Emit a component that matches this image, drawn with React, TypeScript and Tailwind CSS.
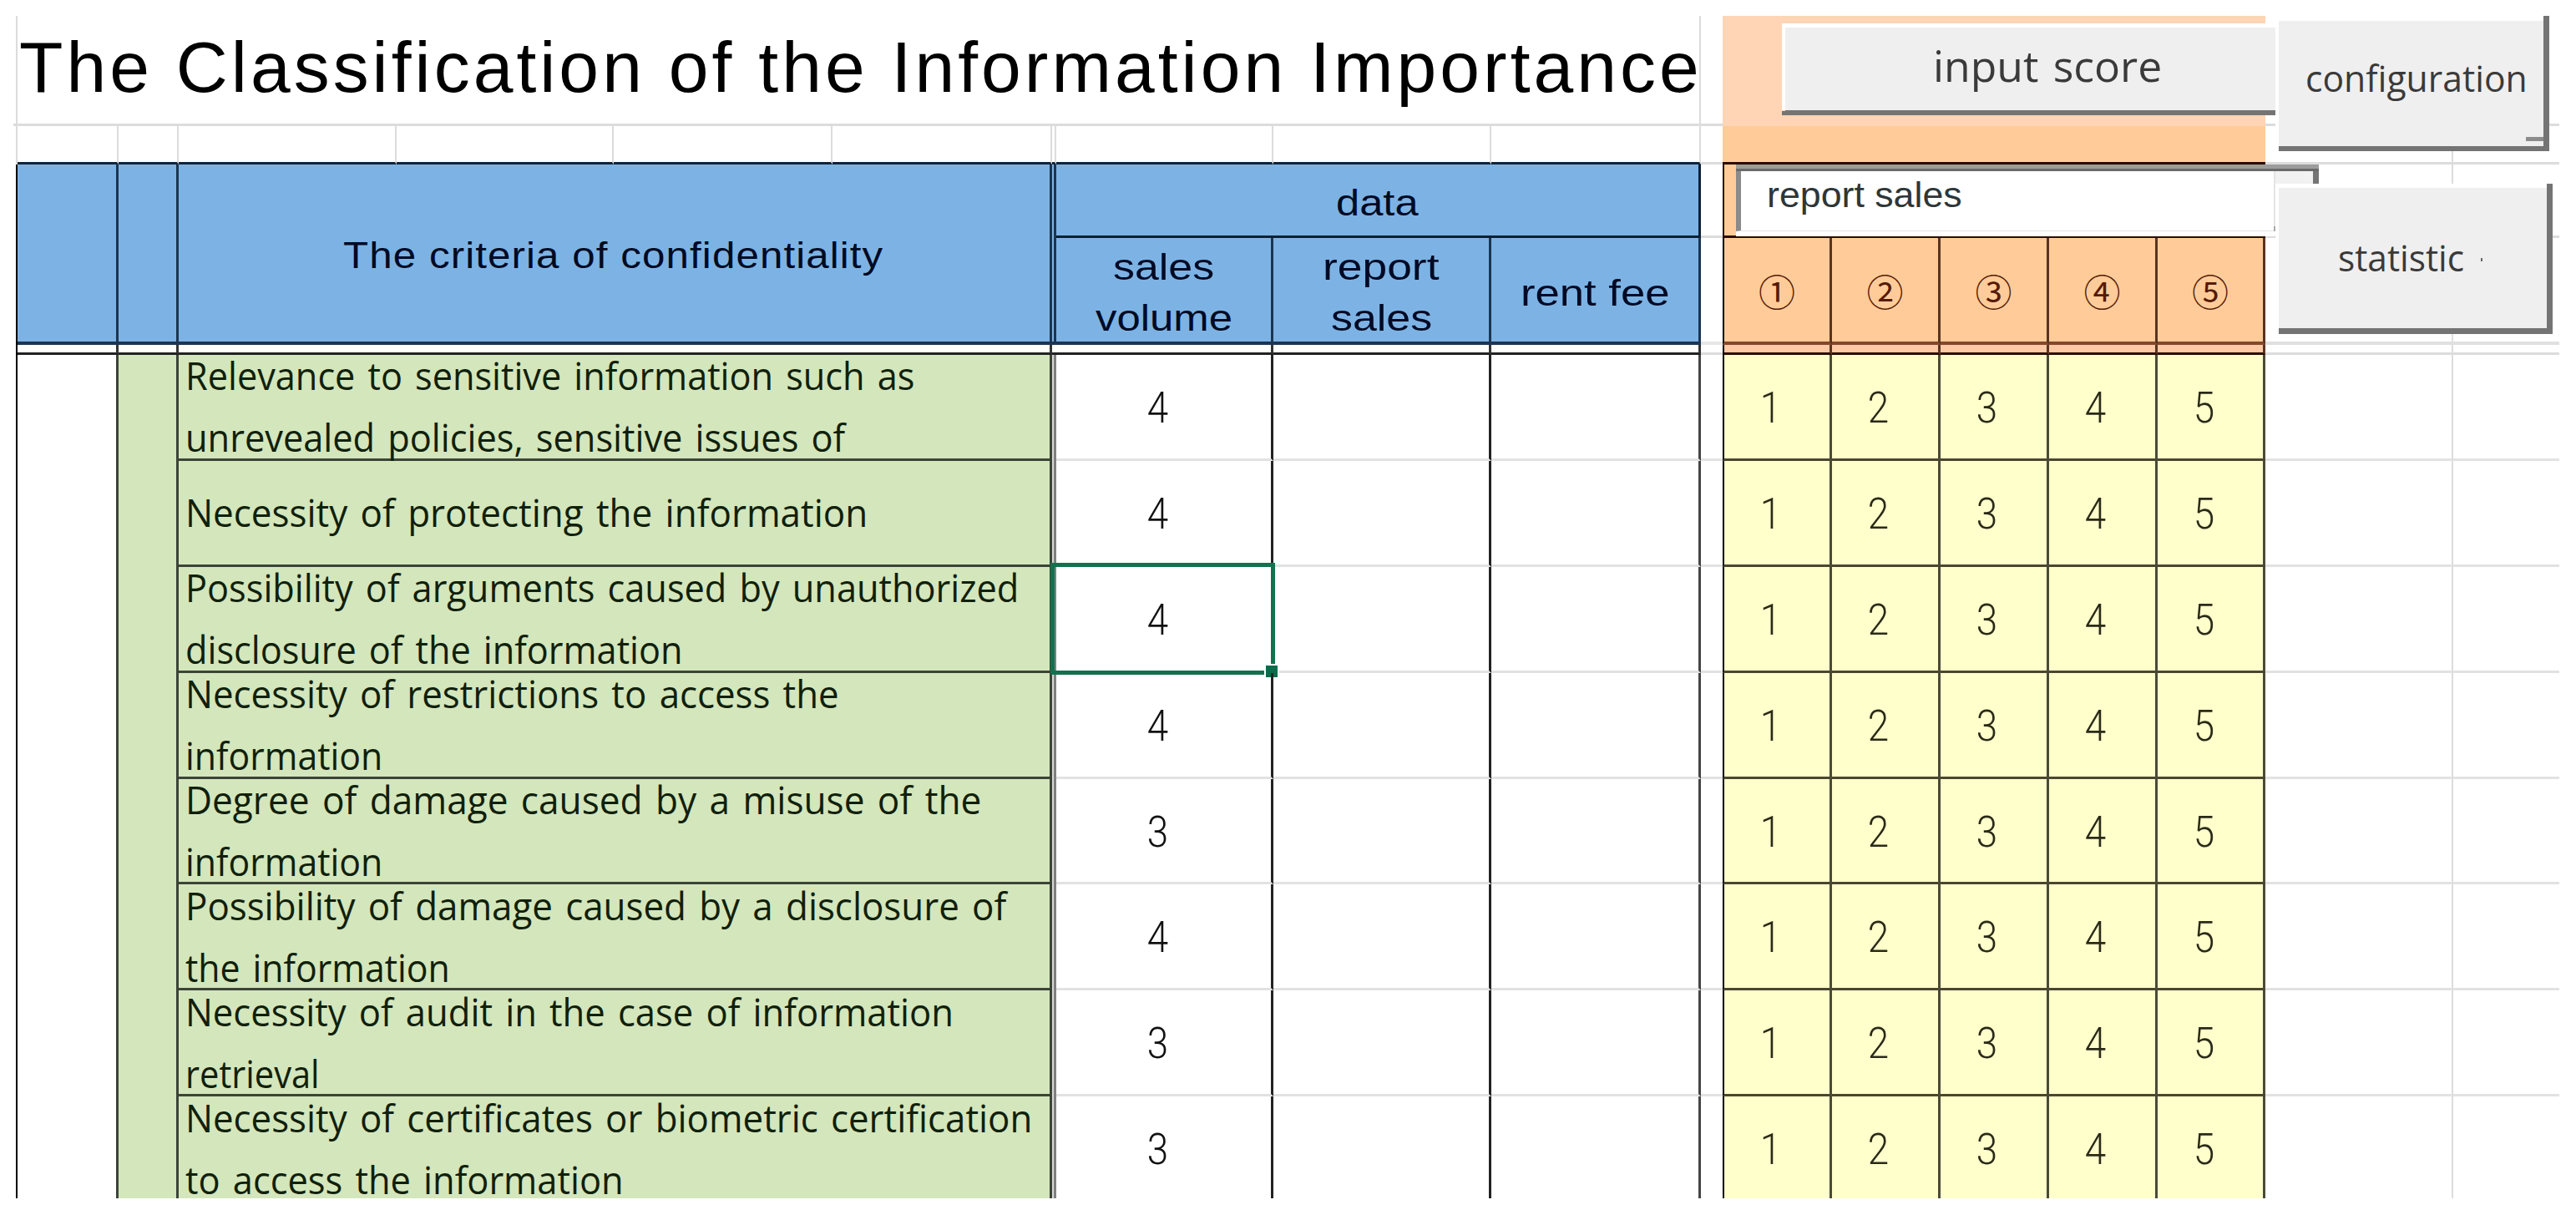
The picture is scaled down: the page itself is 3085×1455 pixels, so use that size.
import { useLayoutEffect, useRef, useState } from "react";
import clsx from "clsx";

const COLS =
  "grid shrink-0 grid-cols-[5px_121px_72px_261px_260px_262px_263px_5px_260px_261px_251px_26px_131px_130px_130px_130px_129px_225px_127px]";
const GOTHIC = "font-['Liberation_Sans',Arial,sans-serif]";
const MALGUN = "font-['Open_Sans','Noto_Sans',sans-serif] [word-spacing:4px]";
const NUM = "font-[Roboto,'Liberation_Sans',sans-serif] font-light text-[52px] leading-none";

/** One line of text, condensed or widened to a given width. */
function Fit({ text, width, className }: { text: string; width: number; className?: string }) {
  const ref = useRef<HTMLSpanElement>(null);
  const [scale, setScale] = useState(1);
  useLayoutEffect(() => {
    if (ref.current) setScale(width / ref.current.offsetWidth);
  }, [width, text]);
  return (
    <span className={clsx("block whitespace-nowrap", className)} style={{ width }}>
      <span ref={ref} className="inline-block origin-left" style={{ transform: `scaleX(${scale})` }}>
        {text}
      </span>
    </span>
  );
}

type Line = [string, number];
const rows: { lines: Line[]; score: number }[] = [
  {
    lines: [
      ["Relevance to sensitive information such as", 873],
      ["unrevealed policies, sensitive issues of", 790],
    ],
    score: 4,
  },
  { lines: [["Necessity of protecting the information", 817]], score: 4 },
  {
    lines: [
      ["Possibility of arguments caused by unauthorized", 998],
      ["disclosure of the information", 596],
    ],
    score: 4,
  },
  { lines: [["Necessity of restrictions to access the", 783], ["information", 236]], score: 4 },
  { lines: [["Degree of damage caused by a misuse of the", 953], ["information", 236]], score: 3 },
  { lines: [["Possibility of damage caused by a disclosure of", 983], ["the information", 317]], score: 4 },
  { lines: [["Necessity of audit in the case of information", 920], ["retrieval", 161]], score: 3 },
  {
    lines: [
      ["Necessity of certificates or biometric certification", 1014],
      ["to access the information", 525],
    ],
    score: 3,
  },
];
const levels = [1, 2, 3, 4, 5];
const circled = ["①", "②", "③", "④", "⑤"];

function TitleRow() {
  return (
    <div className={clsx(COLS, "h-[132px]")}>
      <div className="border-b-3 border-r-2 border-[#dcdcdc]" />
      <div className="col-span-10 flex items-center overflow-hidden border-r-2 border-b-3 border-[#dcdcdc] pb-1.5 pl-0.5">
        <Fit
          text="The Classification of the Information Importance"
          width={2016}
          className={clsx(GOTHIC, "text-[85px] leading-none tracking-[4px] text-black")}
        />
      </div>
      <div className="border-b-3 border-[#dcdcdc]" />
      <div className="col-span-5 bg-[#ffd5b5]" />
      <div className="col-span-2 border-b-3 border-[#dcdcdc]" />
    </div>
  );
}

function SpacerRow() {
  const line = "border-r-2 border-r-[#dcdcdc] border-b-3 border-b-[#10243a]";
  return (
    <div className={clsx(COLS, "h-[46px]")}>
      <div className="border-r-2 border-[#dcdcdc]" />
      {[0, 1, 2, 3, 4, 5, 6, 7, 8, 9].map((i) => (
        <div key={i} className={line} />
      ))}
      <div className="border-b-3 border-[#dcdcdc]" />
      <div className="col-span-5 border-b-3 border-[#2a0d00] bg-[#ffcc99]" />
      <div className="border-r-2 border-b-3 border-[#dcdcdc]" />
      <div className="border-b-3 border-[#dcdcdc]" />
    </div>
  );
}

const HEAD = clsx(GOTHIC, "flex flex-col items-center justify-center bg-[#7db3e4] text-[45px] leading-[61px] text-[#000a24]");

function HeaderRows() {
  return (
    <div className={clsx(COLS, "grid-rows-[88px_128px]")}>
      <div className="row-span-2 border-r-2 border-black" />
      <div className={clsx(HEAD, "row-span-2 border-r-3 border-b-4 border-[#1b3552]")} />
      <div className={clsx(HEAD, "row-span-2 border-r-3 border-b-4 border-[#1b3552]")} />
      <div className={clsx(HEAD, "col-span-4 row-span-2 border-r-3 border-b-4 border-[#1b3552] pt-1")}>
        <Fit text="The criteria of confidentiality" width={647} className="-ml-[3px] tracking-[1px]" />
      </div>
      <div className="row-span-2 border-r-3 border-b-4 border-[#1b3552] bg-[#7db3e4]" />
      <div className={clsx(HEAD, "col-span-3 border-r-3 border-b-3 border-[#0b2036] pt-1.5")}>
        <Fit text="data" width={99} />
      </div>
      <div className="border-b-3 border-[#dcdcdc]" />
      <div className="col-span-5 border-r-3 border-b-3 border-l-2 border-[#2a0d00] bg-[#ffcc99]" />
      <div className="border-r-2 border-b-3 border-[#dcdcdc]" />
      <div className="border-b-3 border-[#dcdcdc]" />
      <div className={clsx(HEAD, "border-r-3 border-b-4 border-[#1b3552] pt-1.5")}>
        <Fit text="sales" width={121} className="h-[61px] shrink-0" />
        <Fit text="volume" width={164} className="h-[61px] shrink-0" />
      </div>
      <div className={clsx(HEAD, "border-r-3 border-b-4 border-[#1b3552] pt-1.5")}>
        <Fit text="report" width={140} className="h-[61px] shrink-0" />
        <Fit text="sales" width={121} className="h-[61px] shrink-0" />
      </div>
      <div className={clsx(HEAD, "border-r-3 border-b-4 border-[#1b3552] pt-1.5")}>
        <Fit text="rent fee" width={179} />
      </div>
      <div className="border-b-4 border-[#e6e6e6]" />
      {circled.map((c, i) => (
        <div
          key={c}
          className={clsx(
            "flex items-center justify-center border-r-3 border-b-4 border-r-[#5a3420] border-b-[#85482c] bg-[#ffcc99] pt-0.5 text-[44px] leading-none text-[#561a05] font-['Noto_Sans_CJK_KR',sans-serif]",
            i === 0 && "border-l-2 border-l-black",
          )}
        >
          {c}
        </div>
      ))}
      <div className="border-r-2 border-b-4 border-[#e0e0e0]" />
      <div className="border-b-4 border-[#e0e0e0]" />
    </div>
  );
}

function DoubleRuleRow() {
  const cell = "border-r-3 border-b-3 border-r-[#333] border-b-[#222]";
  return (
    <div className={clsx(COLS, "h-3")}>
      <div className="border-r-2 border-black" />
      <div className={cell} />
      <div className={cell} />
      <div className={clsx(cell, "col-span-4")} />
      <div className="border-b-3 border-[#222]" />
      <div className={cell} />
      <div className={cell} />
      <div className={cell} />
      <div className="border-b-3 border-[#dcdcdc]" />
      {levels.map((l) => (
        <div
          key={l}
          className={clsx(
            "border-r-3 border-b-3 border-r-[#5a3420] border-b-[#2a0d00] bg-[#ffc9a6]",
            l === 1 && "border-l-2 border-l-black",
          )}
        />
      ))}
      <div className="border-r-2 border-b-3 border-[#dcdcdc]" />
      <div className="border-b-3 border-[#dcdcdc]" />
    </div>
  );
}

function BodyRow({ lines, score, selected }: { lines: Line[]; score: number; selected: boolean }) {
  const grid = "border-b-3 border-b-[#e2e2e2]";
  return (
    <div className={clsx(COLS, "h-[126.9px] grid-rows-[126.9px]")}>
      <div className="border-r-2 border-black" />
      <div className="border-r-3 border-[#3c4438]" />
      <div className="border-r-3 border-[#3c4438] bg-[#d4e6bc]" />
      <div
        className={clsx(
          MALGUN,
          "col-span-4 flex flex-col justify-center gap-[26px] border-r-3 border-b-3 border-[#3c4438] bg-[#d4e6bc] pt-px pl-2 text-[45px] leading-[48px] text-[#10200a]",
        )}
      >
        {lines.map(([t, w]) => (
          <Fit key={t} text={t} width={w} className="h-[48px] shrink-0" />
        ))}
      </div>
      <div className="border-r-3 border-[#808080] bg-[#d8d8d8]" />
      <div
        className={clsx(NUM, grid, "relative flex items-center justify-center border-r-3 border-r-[#222] pr-3.5 pt-1 text-[#111]")}
      >
        <span className="inline-block scale-x-[0.88]">{score}</span>
        {selected && (
          <>
            <div className="absolute -top-[5px] -right-[5px] -bottom-[5px] -left-[7px] border-5 border-[#13714f]" />
            <div className="absolute -right-[10px] -bottom-[10px] size-[18px] border-2 border-white bg-[#0b6b4b]" />
          </>
        )}
      </div>
      <div className={clsx(grid, "border-r-3 border-r-[#222]")} />
      <div className={clsx(grid, "border-r-3 border-r-[#444]")} />
      <div className={grid} />
      {levels.map((l) => (
        <div
          key={l}
          className={clsx(
            NUM,
            "flex items-center justify-center border-r-3 border-b-3 border-r-[#4a4a38] border-b-[#4a4630] bg-[#ffffcc] pr-4 pt-1 text-[#2a2a18]",
            l === 1 && "border-l-2 border-l-black",
          )}
        >
          <span className="inline-block scale-x-[0.88]">{l}</span>
        </div>
      ))}
      <div className={clsx(grid, "border-r-2 border-r-[#dcdcdc]")} />
      <div className={grid} />
    </div>
  );
}

const BUTTON = clsx(MALGUN, "absolute flex flex-col items-center border-[#747474] bg-[#efefef] text-[#3a3a3a]");

function Controls() {
  return (
    <>
      {/* score source combo box */}
      <div className="absolute top-[178px] left-[2063px] h-[86px] w-[645px] bg-white" />
      <div className="absolute top-[178px] left-[2063px] flex h-[80px] w-[646px] border-r-2 border-b-1 border-l-6 border-r-[#e4e4e4] border-b-[#e4e4e4] border-l-[#8a8a8a] bg-white pt-[9px] pl-[31px]">
        <Fit text="report sales" width={234} className={clsx(GOTHIC, "text-[43px] leading-[54px] text-[#2e3638]")} />
      </div>
      <div className="absolute top-[178px] left-[2063px] h-[8px] w-[698px] border-b-3 border-[#6a6a6a] bg-[#9c9c9c]" />
      <div className="absolute top-[186px] left-[2709px] h-[15px] w-[52px] border-r-7 border-[#747474] bg-[#f1f1f1]" />
      <div className="absolute top-[252px] left-[2707px] h-[6px] w-[4px] bg-[#aaaaaa]" />

      {/* input score */}
      <div className="absolute top-[9px] left-[2118px] h-[104px] w-[594px] bg-white" />
      <div className={clsx(BUTTON, "top-[14px] left-[2122px] h-[105px] w-[587px] border-b-6 pt-[14px] pr-[24px] text-[52px] leading-[62px]")}>
        <Fit text="input score" width={274} className="ml-[64px]" />
      </div>
      <div className="absolute top-[114px] left-[2118px] h-[5px] w-[4px] bg-[#747474]" />

      {/* configuration */}
      <div className="absolute top-0 left-[2709px] h-[158px] w-[328px] border-r-7 border-[#747474] bg-white" />
      <div className={clsx(BUTTON, "top-[6px] left-[2713px] h-[156px] w-[324px] border-r-7 border-b-6 pt-[37px] pl-[12px] text-[43px] leading-[64px]")}>
        <Fit text="configuration" width={266} />
        <div className="absolute right-0 bottom-[6px] h-[5px] w-[21px] bg-[#8c8c8c]" />
      </div>

      {/* statistic */}
      <div className="absolute top-[201px] left-[2709px] h-[174px] w-[332px] border-r-7 border-[#747474] bg-white" />
      <div className={clsx(BUTTON, "top-[206px] left-[2713px] h-[175px] w-[328px] border-r-7 border-b-7 pt-[52px] pr-[29px] text-[43px] leading-[64px]")}>
        <Fit text="statistic" width={151} />
        <div className="absolute top-[84px] left-[242px] h-[4px] w-[2px] bg-[#666]" />
      </div>
    </>
  );
}

export default function App() {
  return (
    <div className="h-[1455px] w-[3085px] overflow-hidden bg-white pt-[19px] pl-4">
      <div className="relative flex h-[1416px] w-[3049px] flex-col overflow-hidden">
        <TitleRow />
        <SpacerRow />
        <HeaderRows />
        <DoubleRuleRow />
        {rows.map((r, i) => (
          <BodyRow key={i} lines={r.lines} score={r.score} selected={i === 2} />
        ))}
        <Controls />
      </div>
    </div>
  );
}
